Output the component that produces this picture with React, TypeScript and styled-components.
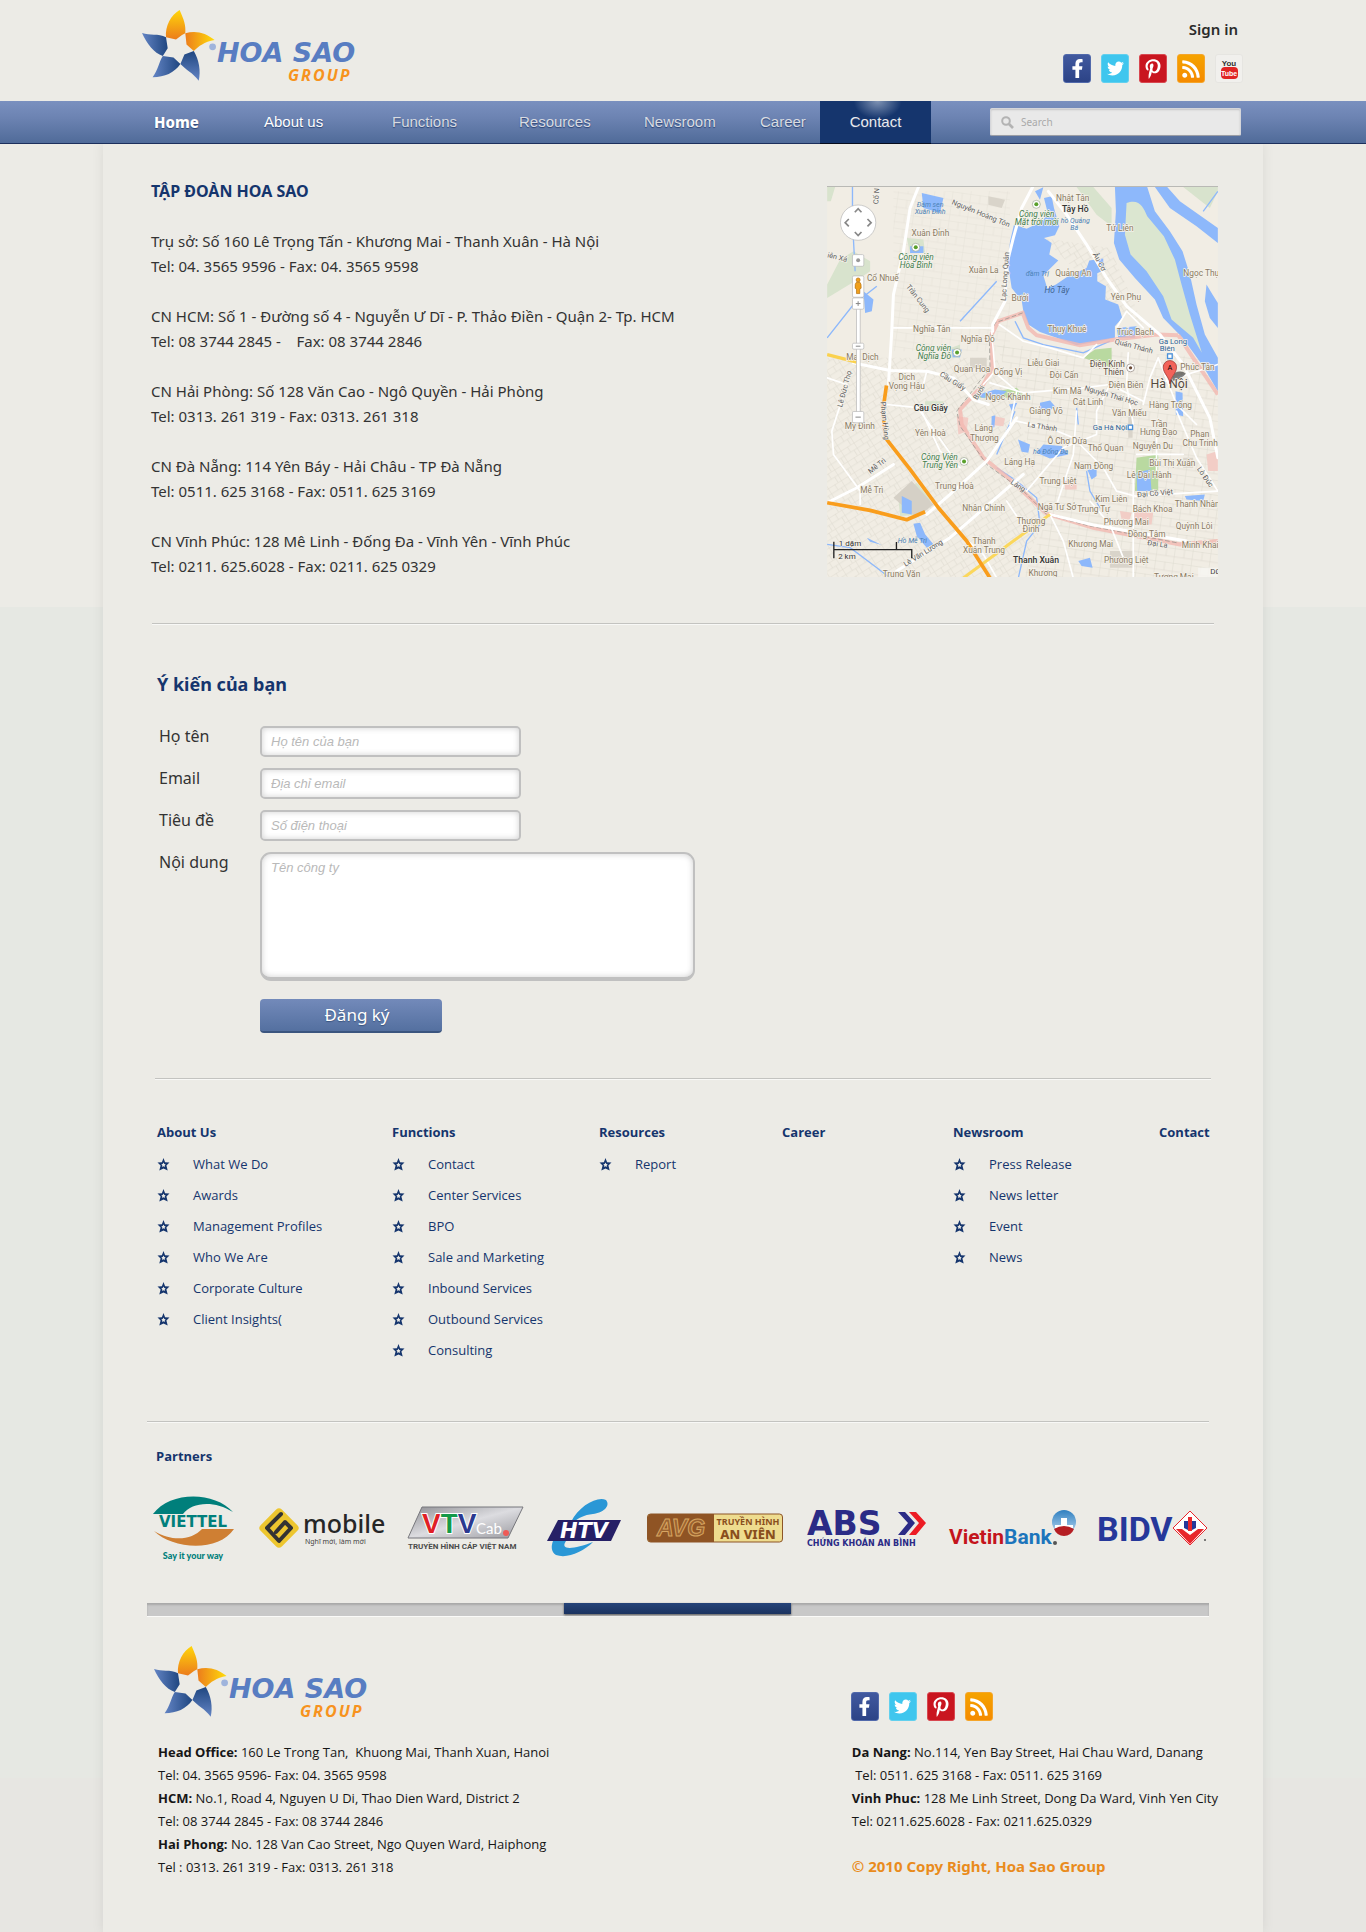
import React from "react";
import styled, { createGlobalStyle, css } from "styled-components";
import { FaFacebookF, FaTwitter, FaPinterestP, FaRss } from "react-icons/fa";

const sans = `"Noto Sans", "Open Sans", sans-serif`;
const small = `"Open Sans", "Noto Sans", sans-serif`;
const arial = `"Liberation Sans", Arial, sans-serif`;
const navy = "#15356d";

const GlobalStyle = createGlobalStyle`
  *, *::before, *::after { box-sizing: border-box; }
  body { margin: 0; background: #ecebe6; font-family: ${sans}; color: #333; }
  h1, h2, h3, p, ul { margin: 0; padding: 0; }
  ul { list-style: none; }
  a { color: inherit; text-decoration: none; }
  svg { display: block; }
`;

const Page = styled.div`
  min-height: 100vh;
  display: flex;
  flex-direction: column;
  background: linear-gradient(#ecebe6 0 607px, #e6e8e3 607px 1778px, #e7e6e2 1778px);
`;

/* ---------- header ---------- */

const Header = styled.header`
  width: 100%;
  max-width: 1160px;
  height: 101px;
  margin: 0 auto;
  padding: 10px 20px 0 39px;
  display: flex;
  justify-content: space-between;
`;

const Account = styled.div`
  display: flex;
  flex-direction: column;
  align-items: flex-end;
  gap: 14px;
  padding-top: 8px;
`;

const SignIn = styled.a`
  padding-right: 5px;
  font-size: 15px;
  line-height: 22px;
  font-weight: 600;
  color: #2b2b2b;
`;

const SocialRow = styled.div`
  display: flex;
  gap: 10px;
`;

const SocialLink = styled.a<{ $bg: string; $edge: string }>`
  width: 28px;
  height: 29px;
  display: flex;
  align-items: center;
  justify-content: center;
  border-radius: 3px;
  border: 1px solid ${(p) => p.$edge};
  background: ${(p) => p.$bg};
  color: #fff;
`;

/* ---------- navigation ---------- */

const NavBar = styled.nav`
  position: relative;
  border-bottom: 1px solid #1c2f5c;
  background: linear-gradient(#7a90bf, #6c83b2 40%, #506b99);
`;

const NavInner = styled.div`
  max-width: 1160px;
  height: 42px;
  margin: 0 auto;
  padding: 0 22px 0 51px;
  display: grid;
  grid-template-columns: 110fr 128fr 127fr 125fr 116fr 60fr 111fr 310fr;
  align-items: stretch;
`;

const NavLink = styled.a<{ $tone?: "bold" | "bright" | "active" }>`
  display: flex;
  align-items: center;
  font-family: ${arial};
  font-size: 15px;
  line-height: 20px;
  white-space: nowrap;
  color: #d9dce2;
  text-shadow: 0 1px 1px #2b4373;
  ${(p) =>
    p.$tone === "bold" &&
    css`
      font-family: ${sans};
      font-weight: 800;
      color: #fff;
    `}
  ${(p) => p.$tone === "bright" && "color: #fff;"}
  ${(p) =>
    p.$tone === "active" &&
    css`
      justify-content: center;
      margin-bottom: -1px;
      border-bottom: 1px solid #050b1c;
      color: #e8eaee;
      background: radial-gradient(ellipse 24px 18px at 52% 0, #7f93b4, #15356d 100%) #15356d;
    `}
`;

const Search = styled.form`
  align-self: center;
  justify-self: end;
  width: 81%;
  height: 28px;
  display: flex;
  align-items: center;
  gap: 7px;
  padding: 0 10px;
  border-radius: 2px;
  border: 1px solid #d5d6da;
  border-bottom-color: #9a9da5;
  background: #e9e9e9;
  box-shadow: inset 0 1px 2px #c4c4c6;
`;

const SearchInput = styled.input`
  flex: 1;
  min-width: 0;
  padding: 0;
  border: 0;
  outline: 0;
  background: none;
  font-family: ${sans};
  font-size: 10px;
  color: #666;
  &::placeholder { color: #a9a9a9; opacity: 1; }
`;

/* ---------- body panel ---------- */

const Panel = styled.div`
  flex: 1;
  width: 100%;
  max-width: 1160px;
  margin: 0 auto;
  background: #ecebe6;
  box-shadow: 0 0 12px rgba(0, 0, 0, 0.08);
`;

const Rule = styled.hr<{ $left: number; $right: number }>`
  height: 2px;
  margin: 0 ${(p) => p.$right}px 0 ${(p) => p.$left}px;
  border: 0;
  border-top: 1px solid #c3c3c0;
  border-bottom: 1px solid #f8f8f6;
`;

const ContactSection = styled.section`
  display: flex;
  justify-content: space-between;
  padding: 35px 45px 44px 48px;
`;

const Offices = styled.div`
  display: flex;
  flex-direction: column;
  gap: 25px;
  font-size: 15px;
  line-height: 25px;
`;

const CompanyName = styled.h1`
  font-size: 16px;
  line-height: 25px;
  font-weight: 700;
  color: ${navy};
`;

const OfficeText = styled.p`
  white-space: pre-wrap;
`;

const MapFrame = styled.div`
  width: 391px;
  height: 391px;
  margin-top: 7px;
  border-top: 1px solid #b9b9b5;
  overflow: hidden;
`;

const FeedbackSection = styled.section`
  padding: 45px 45px 45px 54px;
`;

const FeedbackTitle = styled.h2`
  margin-bottom: 28px;
  font-size: 18px;
  line-height: 28px;
  font-weight: 700;
  color: ${navy};
`;

const Form = styled.form`
  display: grid;
  grid-template-columns: 101px minmax(0, 435px);
  gap: 11px 0;
  align-items: start;
  padding-left: 2px;
`;

const Label = styled.label`
  font-size: 16px;
  line-height: 20px;
`;

const fieldText = css`
  font-family: ${arial};
  font-size: 13px;
  color: #555;
  outline: 0;
  &::placeholder { color: #b9b9b9; font-style: italic; opacity: 1; }
`;

const Field = styled.input`
  ${fieldText}
  width: 60%;
  height: 31px;
  padding: 0 9px;
  border: 2px solid #c0c0c0;
  border-radius: 5px;
  background: #fff;
  box-shadow: inset 0 0 6px #d0d0d0;
`;

const Message = styled.textarea`
  ${fieldText}
  display: block;
  width: 100%;
  height: 129px;
  padding: 5px 9px;
  line-height: 18px;
  resize: none;
  border: 2px solid #c0c0c0;
  border-bottom-width: 4px;
  border-radius: 11px;
  background: #fff;
  box-shadow: inset 0 0 6px #d0d0d0;
`;

const Submit = styled.button`
  grid-column: 2;
  width: 182px;
  height: 34px;
  margin-top: 7px;
  padding: 0 0 0 12px;
  border: 0;
  border-bottom: 2px solid #3b557f;
  border-radius: 4px;
  background: linear-gradient(#738aba, #5470a0);
  font-family: ${sans};
  font-size: 17px;
  line-height: 24px;
  color: #fff;
  text-shadow: 0 1px 1px #3b557f;
`;

/* ---------- site map ---------- */

const SiteMap = styled.section`
  display: grid;
  grid-template-columns: 235fr 207fr 183fr 171fr 206fr 55fr;
  padding: 42px 49px 55px 54px;
  color: ${navy};
  font-family: ${small};
  font-size: 13px;
`;

const SmallTitle = styled.h3`
  font-family: ${small};
  font-size: 13px;
  line-height: 20px;
  font-weight: 700;
  color: ${navy};
`;

const LinkList = styled.ul`
  margin-top: 7px;
`;

const LinkRow = styled.li`
  display: flex;
  align-items: center;
  gap: 23px;
  line-height: 31px;
`;

/* ---------- partners ---------- */

const Partners = styled.section`
  padding: 23px 54px 30px 44px;
`;

const PartnersTitle = styled(SmallTitle)`
  padding-left: 9px;
`;

const LogoRow = styled.div`
  display: flex;
  justify-content: space-between;
  align-items: center;
  margin: 30px 0 43px 5px;
  svg { overflow: visible; }
`;

const Track = styled.div`
  height: 13px;
  background: #c8c8c8;
  box-shadow: inset 0 2px 2px #a9a9a9, 0 1px 0 #fafaf8;
`;

const Thumb = styled.div`
  width: 21.3%;
  height: 11px;
  margin-left: 39.3%;
  background: linear-gradient(#264479, #1a325f);
  box-shadow: 0 1px 2px #555;
`;

/* ---------- footer ---------- */

const Footer = styled.footer`
  display: grid;
  grid-template-columns: 697fr 367fr;
  padding: 0 45px 48px 51px;
  color: #161616;
`;

const FooterHead = styled.div`
  height: 75px;
  display: flex;
  align-items: flex-start;
  margin-bottom: 20px;
`;

const FooterSocial = styled(FooterHead)`
  align-items: flex-end;
`;

const Address = styled.address<{ $indent?: boolean }>`
  padding-left: ${(p) => (p.$indent ? 4 : 1)}px;
  font-family: ${small};
  font-style: normal;
  font-size: 13px;
  line-height: 23px;
  white-space: pre;
`;

const Copyright = styled.p`
  margin: 22px 0 0 1px;
  font-size: 15px;
  line-height: 23px;
  font-weight: 700;
  color: #e98b1d;
`;

/* ---------- drawings ---------- */

function HoaSaoLogo({ id }: { id: string }) {
  const u = (n: string) => `url(#${id}-${n})`;
  return (
    <svg width="216" height="72" viewBox="0 0 216 72" overflow="visible" role="img" aria-label="Hoa Sao Group">
      <defs>
        <linearGradient id={`${id}-a`} x1="0" y1="0" x2="0" y2="1">
          <stop offset="0" stopColor="#ffd60a" />
          <stop offset="1" stopColor="#ec7c1c" />
        </linearGradient>
        <linearGradient id={`${id}-b`} x1="1" y1="0" x2="0" y2="0">
          <stop offset="0" stopColor="#ffdc0a" />
          <stop offset="1" stopColor="#ec7c1c" />
        </linearGradient>
        <linearGradient id={`${id}-c`} x1="0" y1="0" x2="1" y2="0">
          <stop offset="0" stopColor="#6384c4" />
          <stop offset="1" stopColor="#1f4680" />
        </linearGradient>
        <linearGradient id={`${id}-d`} x1="0" y1="1" x2="0" y2="0">
          <stop offset="0" stopColor="#6384c4" />
          <stop offset="1" stopColor="#1f4680" />
        </linearGradient>
      </defs>
      <path fill={u("a")} d="M37.6 0C42 10 44 15 43.3 23.3L40 25L34 29.5L24 27.3C23 16 29 5 37.6 0Z" />
      <path fill={u("b")} d="M43.3 23.3C54 20 64 23 72.6 30C62 32 57 36 51.8 41L44.5 34.5Z" />
      <path fill={u("d")} d="M51.8 41C57 50 59 61 56.7 70.7C51 63 44 60 38.4 54L42.4 44.5Z" />
      <path fill={u("c")} d="M38.4 54C32 63 23 67 10.6 67.3C16 60 17 52 20.8 46L31.5 47.5Z" />
      <path fill={u("c")} d="M0 23C8 26 16 23 24 27.3L25.7 38.3L20.8 46C12 43 5 34 0 23Z" />
      <circle cx="70.6" cy="36.8" r="3.4" fill="#9fb4dc" />
      <text x="75" y="52" fontFamily="DejaVu Sans" fontWeight="700" fontStyle="italic" fontSize="27" fill="#587dc2">HOA SAO</text>
      <text x="146" y="71" fontFamily="Noto Sans" fontWeight="700" fontStyle="italic" fontSize="16" letterSpacing="2" fill="#f7931e">GROUP</text>
    </svg>
  );
}

function YouTubeMark() {
  return (
    <svg width="26" height="27" viewBox="0 0 26 27" aria-hidden="true">
      <text x="13" y="11" textAnchor="middle" fontFamily="Liberation Sans" fontWeight="700" fontSize="8" fill="#333">You</text>
      <rect x="5" y="12" width="17" height="12" rx="4" fill="#e02424" />
      <text x="13" y="21" textAnchor="middle" fontFamily="Liberation Sans" fontWeight="700" fontSize="7" fill="#fff">Tube</text>
    </svg>
  );
}

function StarBullet() {
  return (
    <svg width="13" height="13" viewBox="0 0 12 13" aria-hidden="true">
      <path
        fillRule="evenodd"
        fill={navy}
        d="M6 0L7.6 4.2L12 4.6L8.9 7.6L10.2 12.6L6 10.4L1.8 12.6L3.1 7.6L0 4.6L4.4 4.2ZM6 4.6L5.2 6L3.9 6.3L4.8 7.4L4.7 9L6 8.3L7.3 9L7.2 7.4L8.1 6.3L6.8 6Z"
      />
    </svg>
  );
}

function Magnifier() {
  return (
    <svg width="13" height="13" viewBox="0 0 13 13" fill="none" stroke="#b3b3b3" aria-hidden="true">
      <circle cx="5" cy="5" r="3.8" strokeWidth="2" />
      <path d="M8 8L12 12" strokeWidth="2.6" />
    </svg>
  );
}

type Place = [number, number, string, number?];
const places: Place[] = [
  [788, 88, "Nhật Tân"], [930, 178, "Tứ Liên"], [361, 194, "Xuân Đỉnh"], [521, 304, "Xuân La"],
  [218, 329, "Cổ Nhuế"], [790, 313, "Quảng An"], [630, 389, "Bưởi"], [948, 386, "Yên Phụ"],
  [365, 481, "Nghĩa Tân"], [503, 511, "Nghĩa Đô"], [771, 481, "Thụy Khuê"], [976, 491, "Trúc Bạch"],
  [157, 567, "Mai Dịch"], [290, 626, "Dịch"], [290, 653, "Vọng Hậu"], [486, 602, "Quan Hoa"],
  [594, 612, "Cống Vị"], [700, 585, "Liễu Giai"], [762, 620, "Đội Cấn"], [948, 650, "Điện Biên"],
  [594, 687, "Ngọc Khánh"], [772, 668, "Kim Mã"], [834, 703, "Cát Linh"], [708, 728, "Giảng Võ"],
  [958, 735, "Văn Miếu"], [1082, 710, "Hàng Trống"], [1048, 767, "Trần"], [1046, 793, "Hưng Đạo"],
  [1170, 799, "Phan"], [1171, 825, "Chu Trinh"], [149, 775, "Mỹ Đình"], [361, 796, "Yên Hoà"],
  [521, 780, "Láng"], [523, 809, "Thượng"], [772, 819, "Ô Chợ Dừa"], [887, 841, "Thổ Quan"],
  [1029, 835, "Nguyễn Du"], [629, 882, "Láng Hạ"], [851, 893, "Nam Đồng"], [1087, 885, "Bùi Thị Xuân"],
  [1018, 920, "Lê Đại Hành"], [433, 954, "Trung Hoà"], [744, 939, "Trung Liệt"], [185, 965, "Mễ Trì"],
  [521, 1020, "Nhân Chính"], [741, 1018, "Ngã Tư Sở"], [851, 1024, "Trung Tự"], [904, 993, "Kim Liên"],
  [1028, 1024, "Bách Khoa"], [1162, 1009, "Thanh Nhàn"], [949, 1063, "Phương Mai"], [1153, 1074, "Quỳnh Lôi"],
  [663, 1060, "Thượng"], [663, 1083, "Đình"], [1010, 1097, "Đồng Tâm"], [842, 1128, "Khương Mai"],
  [522, 1119, "Thanh"], [522, 1145, "Xuân Trung"], [1171, 1132, "Minh Khai"], [949, 1176, "Phương Liệt"],
  [699, 1214, "Khương"], [274, 1219, "Trung Văn"], [1092, 1226, "Tương Mai"], [1180, 315, "Ngọc Thụy"],
  [1163, 595, "Phúc Tân"],
];
const streets: Place[] = [
  [510, 133, "Nguyễn Hoàng Tôn", 22], [592, 316, "Lạc Long Quân", -86], [862, 275, "Âu Cơ", 62],
  [318, 386, "Trần Cung", 52], [424, 636, "Cầu Giấy", 32], [513, 668, "Bưởi", -58],
  [970, 532, "Quán Thánh", 15], [902, 680, "Nguyễn Thái Học", 16], [696, 774, "La Thành", 9],
  [110, 655, "Lê Đức Thọ", -75], [217, 750, "Phạm Hùng", 84], [205, 890, "Mễ Trì", -38],
  [620, 950, "Láng", 33], [1036, 974, "Đại Cồ Việt", -5], [1180, 922, "Lò Đúc", 55],
  [1042, 1126, "Đại La", 8], [343, 1152, "Lê Văn Lương", -32], [206, 75, "Cổ N", -86], [80, 265, "iên Xá", 14],
];
const parks: Place[] = [
  [680, 136, "Công viên"], [680, 160, "Mặt trời mới"], [318, 265, "Công viên"], [318, 290, "Hòa Bình"],
  [370, 539, "Công viên"], [373, 564, "Nghĩa Đô"], [388, 867, "Công Viên"], [390, 891, "Trung Yên"],
];
const waters: Place[] = [
  [360, 107, "Đầm sen"], [360, 128, "Xuân Đỉnh"], [796, 155, "hồ Quảng"], [793, 175, "Bá"],
  [682, 315, "đầm Trị"], [722, 849, "hồ Đống Đa"], [307, 1116, "Hồ Mễ Trì"],
];

function HanoiMap() {
  const dots: [number, number][] = [[679, 99], [317, 228], [441, 544], [462, 871]];
  return (
    <svg width="391" height="391" viewBox="51 47 1173 1174" fontFamily="Roboto" role="img" aria-label="Hà Nội">
      <defs>
        <pattern id="blocks" width="46" height="38" patternUnits="userSpaceOnUse" patternTransform="rotate(-32)">
          <path d="M0 1H46M1 0V38M24 0V20M0 20H46M36 20V38" stroke="#ddd8cd" strokeWidth="1.6" fill="none" />
        </pattern>
        <pattern id="blocks2" width="54" height="44" patternUnits="userSpaceOnUse" patternTransform="rotate(8)">
          <path d="M0 1H54M1 0V44M30 0V26M0 26H54" stroke="#dcd7cd" strokeWidth="1.6" fill="none" />
        </pattern>
      </defs>
      <rect x="51" y="47" width="1173" height="1174" fill="#f1ede4" />
      <path d="M51 560H560L720 1020L620 1221H51Z" fill="url(#blocks)" />
      <path d="M560 520L1224 560V1221H640L720 1020Z" fill="url(#blocks2)" />
      <path d="M250 60H600V540H250Z" fill="url(#blocks2)" opacity=".6" />
      <path d="M700 200L900 230L1000 460L900 400Z" fill="url(#blocks)" />

      <g fill="#d8e3cd">
        <path d="M51 47H75L62 90H51ZM90 265L130 240L180 270V300L150 320L51 380V340Z" />
        <path d="M800 47H850L905 110V165L860 130ZM1120 47H1224V60L1200 110Z" />
        <path d="M290 200L340 205L345 245L300 245ZM410 535L450 520V560H415Z" />
        <path d="M855 535L905 530V590L820 560ZM980 860L1045 850V960H975ZM500 670L620 650L650 680H510Z" fill="#b9d9a0" />
        <path d="M265 985L320 935L360 985L330 1030L270 1035ZM345 690L400 690V720H345Z" />
      </g>
      <path d="M250 980L305 930L370 1000L320 1040Z" fill="#d5d0c6" />
      <g fill="#f2cdc6">
        <path d="M440 735L475 740L470 780L445 790ZM555 735L585 742L580 765L552 762ZM975 1020L1030 1025L1025 1060H970ZM765 930H800V955H765Z" />
        <path d="M1190 850L1224 840V900H1195ZM930 1020L965 1025L960 1045H935Z" />
      </g>
      <g fill="#d9d4ca">
        <path d="M535 75L585 85L575 110L535 100ZM955 720H968V800H955ZM480 560H530V590H480ZM1120 860H1150V890H1120ZM900 1140H970V1190H900Z" />
      </g>

      <g fill="#8db8fb">
        <path d="M612 160L650 172L700 148L712 120L702 80L725 75L732 110L748 165L735 192L702 200L725 215L718 250L745 268L700 312L712 352L738 340L770 318L830 290L838 268L880 262L880 298L862 306L862 330L888 345L886 385L925 400L937 440L915 465L915 500L860 512L800 522L740 500L690 482L655 460L640 420L635 388L605 350L594 280L600 210Z" />
        <path d="M915 47H1012L1035 120L1080 180L1118 240L1140 310L1160 400L1185 490L1224 560V660L1180 585L1118 500L1060 440L1035 385L975 320L928 265L912 215L918 120Z" />
        <path d="M1035 47H1072L1110 90L1224 170V215L1160 165L1080 110Z" />
        <path d="M1190 340L1208 370L1224 395V470L1200 440L1185 390Z" />
        <path d="M335 65L400 80L390 125L340 110ZM160 360L190 385L185 420L165 425ZM300 225H340V245H300ZM425 535H455L450 558H428Z" />
        <path d="M690 695L720 688L735 705L715 722L690 715ZM597 700L622 695L608 725ZM505 670L555 655L590 660L570 680H515Z" />
        <path d="M624 805L660 820L655 845L635 842ZM700 820L755 825L775 850L720 862L680 845ZM832 895L860 893V915L845 925ZM980 905L1020 895L1025 960H982Z" />
        <path d="M1097 660L1118 665L1120 735L1098 730ZM275 975L305 990V1030L275 1025ZM310 1058L330 1055L345 1090L370 1120L350 1130L320 1095ZM170 1100L215 1122L180 1112Z" />
        <path d="M675 60L700 48L690 85ZM545 735L556 732L553 768L544 770ZM805 1170L840 1160L848 1190L815 1185ZM1125 975L1185 970L1180 990L1130 985ZM920 470L980 465L975 500L925 500Z" />
      </g>
      <path d="M950 95C990 82 1000 108 1012 135L1062 195L1095 265L1115 340L1140 430L1176 545L1150 500L1085 445L1060 375L1010 300L962 250L945 190Z" fill="#dbe6d0" />
      <g fill="none" stroke="#8db8fb" strokeWidth="4">
        <path d="M127 47V150L135 300M200 345L130 400L51 500M450 450L560 330M1224 60L1180 120" />
        <path d="M615 450L640 500L700 520L820 545L900 510M560 890L620 930L680 980L690 1060L650 1110L625 1221M830 900L840 960L870 1010" />
        <path d="M51 1120L120 1130L200 1190L240 1221M800 710L805 760M615 720L560 850" />
      </g>

      <path d="M1105 492L1040 490L915 505L810 522L680 492L655 470L638 425L565 450L545 490L547 590L520 640L450 715L455 760L520 860L600 925L710 1028L850 1070L1110 1120L1224 1110M1105 492L1150 560L1224 670" fill="none" stroke="#f2b8b0" strokeWidth="12" opacity=".8" />
      <path d="M638 425L555 455L538 500L540 590L440 720L450 765L530 880L640 960L710 1030L840 1065L1100 1115" fill="none" stroke="#8c8c86" strokeWidth="2" strokeDasharray="14 7" />

      <g fill="none" stroke="#fff" strokeLinejoin="round" strokeLinecap="round">
        <g strokeWidth="9">
          <path d="M325 47L300 110L280 240L250 370L245 480L235 640" />
          <path d="M668 47L635 110L610 200L590 280L585 390L548 460V480" />
          <path d="M715 60L770 130L830 220L890 320L950 405L1050 490L1120 580L1140 620L1200 740L1224 860" />
          <path d="M130 575L240 598L350 600L430 620L490 685L535 700M720 1030L850 1062L1130 1110" />
          <path d="M350 1030L420 970L530 870L620 740" />
          <path d="M51 995L140 950L250 880M260 1200L420 1100L640 910" />
        </g>
        <g strokeWidth="5">
          <path d="M250 470H548M568 460L640 510L720 530L820 560L860 520M545 480L555 600L520 640M350 600L335 660" />
          <path d="M540 635L640 665L820 650L900 640L1000 690M620 750L730 775L790 800L880 890L920 960L975 975L1224 960" />
          <path d="M970 900V1221M955 545L950 640L970 760M900 640L860 720L860 790L760 830L700 900L650 960" />
          <path d="M230 700L330 710L390 840L450 890M51 620L110 640L65 780L70 850L150 960V1000M330 720L430 860" />
          <path d="M550 600L620 660L600 760M800 720L790 850L740 1000M1045 560L1020 620L1000 700M1045 560L1100 700L1160 760" />
          <path d="M1040 800V900M980 850H1120M1100 720L1160 860L1224 960M840 990L900 1060L940 1160M1224 580L1100 620L1040 640" />
          <path d="M440 1080L520 1150L560 1221M590 990L650 1080M720 1030L760 1110L790 1221M920 470L950 420L1000 470" />
        </g>
      </g>

      <g fill="none" strokeLinejoin="round">
        <path d="M51 550L140 573" stroke="#fad14e" strokeWidth="10" />
        <path d="M720 1030L610 1110L460 1221" stroke="#fbd75c" strokeWidth="9" />
        <path d="M229 643L218 720L226 800L300 895L385 1010L470 1110L540 1221" stroke="#f99d1c" strokeWidth="11" />
        <path d="M51 995L180 1018L290 1046L345 1022" stroke="#f99d1c" strokeWidth="11" />
      </g>

      <g textAnchor="middle" fontSize="26" stroke="#f6f3ec" strokeWidth="4" paintOrder="stroke">
        <g fill="#8a7a62" fontSize="25">
          {places.map(([x, y, t]) => <text key={t + y} x={x} y={y}>{t}</text>)}
        </g>
        <g fill="#5d5d5d" fontSize="22">
          {streets.map(([x, y, t, r]) => <text key={t + y} transform={`rotate(${r} ${x} ${y})`} x={x} y={y}>{t}</text>)}
        </g>
        <g fill="#3f7d4c" fontStyle="italic" fontSize="25">
          {parks.map(([x, y, t]) => <text key={t + y} x={x} y={y}>{t}</text>)}
        </g>
        <g fill="#4b82b5" fontStyle="italic" fontSize="21" stroke="none">
          {waters.map(([x, y, t]) => <text key={t + y} x={x} y={y}>{t}</text>)}
          <text x="741" y="364" fontSize="25" fill="#41648f">Hồ Tây</text>
        </g>
        <g fill="#2c6296" fontSize="23">
          <text x="1089" y="517">Ga Long</text>
          <text x="1072" y="540">Biên</text>
          <text x="900" y="777">Ga Hà Nội</text>
        </g>
        <g fill="#5c4f44" fontSize="25">
          <text x="892" y="586">Điện Kính</text>
          <text x="911" y="611">Thiên</text>
        </g>
        <g fill="#333" fontSize="26" fontWeight="500">
          <text x="796" y="122">Tây Hồ</text>
          <text x="362" y="721">Cầu Giấy</text>
          <text x="678" y="1175">Thanh Xuân</text>
        </g>
      </g>

      {dots.map(([x, y]) => (
        <g key={x}>
          <circle cx={x} cy={y} r="12" fill="#fff" stroke="#9aa590" strokeWidth="2" />
          <circle cx={x} cy={y} r="6" fill="#5aa02c" />
        </g>
      ))}
      <circle cx="962" cy="590" r="12" fill="#fff" stroke="#8b8178" strokeWidth="2" />
      <circle cx="962" cy="590" r="5" fill="#6b4a36" />
      <g fill="#fff" stroke="#4a90d9" strokeWidth="4">
        <rect x="1073" y="548" width="14" height="14" />
        <rect x="955" y="762" width="13" height="13" />
      </g>

      <path d="M1080 632L1095 605Q1115 595 1128 608Q1115 625 1080 632Z" fill="#000" opacity=".5" />
      <text x="1078" y="652" textAnchor="middle" fontSize="37" fill="#54493d" stroke="#f6f3ec" strokeWidth="4" paintOrder="stroke">Hà Nội</text>
      <path d="M1080 638C1078 615 1060 608 1060 588A20 20 0 0 1 1100 588C1100 608 1082 615 1080 638Z" fill="#f2635a" stroke="#8f2a24" strokeWidth="2" />
      <text x="1080" y="597" textAnchor="middle" fontSize="22" fill="#000">A</text>

      <g stroke="#b5b5b5" strokeWidth="2">
        <circle cx="144" cy="154" r="53" fill="#fff" />
        <rect x="139" y="400" width="11" height="330" fill="#fff" />
        <rect x="127" y="250" width="34" height="35" rx="4" fill="#fff" />
        <rect x="127" y="314" width="34" height="64" rx="4" fill="#fff" />
        <rect x="127" y="380" width="34" height="34" rx="4" fill="#fff" />
        <rect x="127" y="721" width="34" height="34" rx="4" fill="#fff" />
        <rect x="127" y="516" width="34" height="18" rx="4" fill="#fff" />
      </g>
      <g fill="none" stroke="#888" strokeWidth="5">
        <path d="M134 123L144 112L154 123M134 182L144 193L154 182M116 143L105 154L116 165M172 143L183 154L172 165" />
        <path d="M137 397H151M144 390V404M136 738H152M137 525H151" strokeWidth="3" />
      </g>
      <circle cx="144" cy="267" r="6" fill="#999" />
      <path d="M139 333H149Q154 336 153 351L149 353V367H139V353L135 351Q134 336 139 333Z" fill="#f0a01c" stroke="#b46c0a" strokeWidth="2" />
      <circle cx="144" cy="326" r="6" fill="#f0a01c" stroke="#b46c0a" strokeWidth="2" />

      <path d="M71 1112V1162M71 1136H305V1162M259 1113V1136" fill="none" stroke="#222" strokeWidth="4" />
      <g fill="#333" fontSize="24" stroke="#f6f3ec" strokeWidth="3" paintOrder="stroke">
        <text x="86" y="1125">1 dặm</text>
        <text x="84" y="1164">2 km</text>
      </g>
      <rect x="1165" y="1190" width="59" height="31" fill="#f7f6f3" opacity=".8" />
      <text x="1201" y="1210" fontSize="24" fill="#444">Dữ</text>
    </svg>
  );
}

const Viettel = () => (
  <svg width="84" height="64" viewBox="0 0 84 64" role="img" aria-label="Viettel">
    <path fill="#007f7b" d="M1 18C18 -5 62 -5 81 16C62 4 40 6 31 18Z" />
    <path fill="#cf7f33" d="M2 35C20 46 40 44 50 33H82C66 57 20 53 2 35Z" />
    <text x="41" y="31" textAnchor="middle" fontFamily="DejaVu Sans" fontWeight="700" fontSize="15" fill="#007f7b">VIETTEL</text>
    <text x="41" y="63" textAnchor="middle" fontFamily="Lato" fontWeight="900" fontSize="9" fill="#007f7b">Say it your way</text>
  </svg>
);

const Gmobile = () => (
  <svg width="127" height="44" viewBox="0 0 127 44" role="img" aria-label="Gmobile">
    <rect x="6" y="7" width="30" height="30" rx="4" transform="rotate(45 21 22)" fill="#edc62f" />
    <path d="M23 8L9 22L21 35L33 22L27 16L18 26" fill="none" stroke="#333" strokeWidth="4" strokeLinejoin="round" strokeLinecap="round" />
    <text x="45" y="27" fontFamily="Noto Sans" fontWeight="500" fontSize="25" fill="#262626">mobile</text>
    <text x="47" y="38" fontFamily="Noto Sans" fontSize="7" fill="#444">Nghĩ mới, làm mới</text>
  </svg>
);

const VtvCab = () => (
  <svg width="118" height="44" viewBox="0 0 118 44" role="img" aria-label="VTVCab">
    <defs>
      <linearGradient id="steel" x1="0" y1="0" x2="1" y2="1">
        <stop offset="0" stopColor="#8f8f94" />
        <stop offset=".5" stopColor="#dcdce0" />
        <stop offset="1" stopColor="#98989e" />
      </linearGradient>
    </defs>
    <path d="M15 1H116L101 32H1Z" fill="url(#steel)" stroke="#77777c" />
    <text x="15" y="27" strokeWidth="2" stroke="#fff" paintOrder="stroke" fontFamily="Liberation Sans" fontWeight="700" fontSize="28">
      <tspan fill="#e01f26">V</tspan><tspan fill="#149a48">T</tspan><tspan fill="#2b3990">V</tspan>
    </text>
    <text x="69" y="28" fontFamily="Lato" fontSize="15" fill="#fff">Cab</text>
    <circle cx="99" cy="27" r="3" fill="#ef5a55" />
    <text x="1" y="43" fontFamily="Roboto" fontWeight="700" fontSize="8" fill="#4b4b4b">TRUYỀN HÌNH CÁP VIỆT NAM</text>
  </svg>
);

const Htv = () => (
  <svg width="79" height="60" viewBox="0 0 79 60" role="img" aria-label="HTV">
    <path d="M24 24C32 8 50 -2 59 2C64 8 56 15 46 16C37 17 31 20 27 24Z" fill="#2a97d6" />
    <path d="M6 43H19C12 53 28 51 46 44C36 54 20 61 9 57C4 54 4 48 6 43Z" fill="#2a97d6" />
    <path d="M11 22H74L64 43H0Z" fill="#262066" />
    <text x="37" y="40" textAnchor="middle" fontFamily="DejaVu Sans" fontWeight="700" fontStyle="italic" fontSize="21" fill="#fff">HTV</text>
  </svg>
);

const AnVien = () => (
  <svg width="138" height="30" viewBox="0 0 138 30" role="img" aria-label="AVG An Viên">
    <rect x=".5" y="1" width="135" height="28" rx="3" fill="#eedc8f" stroke="#8d5527" />
    <path d="M4 1H67V29H4Q1 29 1 26V4Q1 1 4 1Z" fill="#8f5424" />
    <text x="34" y="23" textAnchor="middle" fontFamily="Liberation Sans" fontWeight="700" fontStyle="italic" fontSize="23" fill="#9a6230" stroke="#d7a561" strokeWidth="1">AVG</text>
    <text x="101" y="12" textAnchor="middle" fontFamily="Noto Sans" fontWeight="700" fontSize="9" fill="#8a4f1d">TRUYỀN HÌNH</text>
    <text x="101" y="26" textAnchor="middle" fontFamily="Noto Sans" fontWeight="800" fontSize="13" fill="#8a4f1d">AN VIÊN</text>
  </svg>
);

const Abs = () => (
  <svg width="120" height="36" viewBox="0 0 120 36" role="img" aria-label="ABS">
    <text x="0" y="25" fontFamily="DejaVu Sans" fontWeight="700" fontSize="33" fill="#2b2b86">ABS</text>
    <path d="M91 2H98L108 13L98 25H91L101 13Z" fill="#2b2b86" />
    <path d="M102 2H109L119 13L109 25H102L112 13Z" fill="#ed1c24" />
    <text x="0" y="36" fontFamily="DejaVu Sans" fontWeight="700" fontSize="8" fill="#2b2b86">CHỨNG KHOÁN AN BÌNH</text>
  </svg>
);

const VietinBank = () => (
  <svg width="127" height="46" viewBox="0 0 127 46" role="img" aria-label="VietinBank">
    <defs>
      <linearGradient id="globe" x1="0" y1="0" x2="0" y2="1">
        <stop offset="0" stopColor="#2f7fc0" />
        <stop offset="1" stopColor="#b9d8f0" />
      </linearGradient>
    </defs>
    <text x="0" y="39" fontFamily="Roboto" fontWeight="700" fontSize="21" fill="#c4151c">
      Vietin<tspan fill="#1c75bc">Bank</tspan>
    </text>
    <circle cx="106" cy="38" r="2" fill="#555" />
    <circle cx="115" cy="17" r="12" fill="url(#globe)" />
    <path d="M112 13H118V20H124V23H106V20H112Z" fill="#fff" />
    <path d="M105 24Q115 18 125 24Q122 31 115 31T105 24Z" fill="#b51e23" />
  </svg>
);

const Bidv = () => (
  <svg width="111" height="40" viewBox="0 0 111 40" role="img" aria-label="BIDV">
    <text x="-1" y="33" fontFamily="Roboto" fontWeight="700" fontSize="34" fill="#26389a">BIDV</text>
    <path d="M92 3L109 20L92 37L75 20Z" fill="#fff" stroke="#e8262b" />
    <path d="M86 13H98V20L92 23L86 20Z" fill="#26389a" />
    <path d="M78 21H84L92 27L100 21H106L92 36Z" fill="#e8262b" />
    <path d="M90 9H94V23H90Z" fill="#e8262b" />
    <circle cx="107" cy="32" r="1" fill="#555" />
  </svg>
);

/* ---------- content ---------- */

const offices = [
  ["Trụ sở: Số 160 Lê Trọng Tấn - Khương Mai - Thanh Xuân - Hà Nội", "Tel: 04. 3565 9596 - Fax: 04. 3565 9598"],
  ["CN HCM: Số 1 - Đường số 4 - Nguyễn Ư Dĩ - P. Thảo Điền - Quận 2- Tp. HCM", "Tel: 08 3744 2845 -    Fax: 08 3744 2846"],
  ["CN Hải Phòng: Số 128 Văn Cao - Ngô Quyền - Hải Phòng", "Tel: 0313. 261 319 - Fax: 0313. 261 318"],
  ["CN Đà Nẵng: 114 Yên Báy - Hải Châu - TP Đà Nẵng", "Tel: 0511. 625 3168 - Fax: 0511. 625 3169"],
  ["CN Vĩnh Phúc: 128 Mê Linh - Đống Đa - Vĩnh Yên - Vĩnh Phúc", "Tel: 0211. 625.6028 - Fax: 0211. 625 0329"],
];

const siteMap: { title: string; links: string[] }[] = [
  { title: "About Us", links: ["What We Do", "Awards", "Management Profiles", "Who We Are", "Corporate Culture", "Client Insights("] },
  { title: "Functions", links: ["Contact", "Center Services", "BPO", "Sale and Marketing", "Inbound Services", "Outbound Services", "Consulting"] },
  { title: "Resources", links: ["Report"] },
  { title: "Career", links: [] },
  { title: "Newsroom", links: ["Press Release", "News letter", "Event", "News"] },
  { title: "Contact", links: [] },
];

function Social({ youtube = false }: { youtube?: boolean }) {
  return (
    <SocialRow>
      <SocialLink href="#" aria-label="Facebook" $bg="linear-gradient(#41599f, #2c4386)" $edge="#5169ab"><FaFacebookF size={19} /></SocialLink>
      <SocialLink href="#" aria-label="Twitter" $bg="#3fc6ee" $edge="#62d0ee"><FaTwitter size={17} /></SocialLink>
      <SocialLink href="#" aria-label="Pinterest" $bg="#c9151f" $edge="#d84850"><FaPinterestP size={20} /></SocialLink>
      <SocialLink href="#" aria-label="RSS" $bg="linear-gradient(#f5a300, #f58a00)" $edge="#f5a52a"><FaRss size={20} /></SocialLink>
      {youtube && <SocialLink href="#" aria-label="YouTube" $bg="#f1f0ed" $edge="#e6e5e1"><YouTubeMark /></SocialLink>}
    </SocialRow>
  );
}

export default function App() {
  return (
    <Page>
      <GlobalStyle />
      <Header>
        <a href="#"><HoaSaoLogo id="top" /></a>
        <Account>
          <SignIn href="#">Sign in</SignIn>
          <Social youtube />
        </Account>
      </Header>
      <NavBar>
        <NavInner>
          <NavLink href="#" $tone="bold">Home</NavLink>
          <NavLink href="#" $tone="bright">About us</NavLink>
          <NavLink href="#">Functions</NavLink>
          <NavLink href="#">Resources</NavLink>
          <NavLink href="#">Newsroom</NavLink>
          <NavLink href="#">Career</NavLink>
          <NavLink href="#" $tone="active">Contact</NavLink>
          <Search role="search">
            <Magnifier />
            <SearchInput type="search" aria-label="Search" placeholder="Search" />
          </Search>
        </NavInner>
      </NavBar>
      <Panel>
        <main>
          <ContactSection>
            <Offices>
              <CompanyName>TẬP ĐOÀN HOA SAO</CompanyName>
              {offices.map((lines) => (
                <OfficeText key={lines[0]}>{lines.join("\n")}</OfficeText>
              ))}
            </Offices>
            <MapFrame><HanoiMap /></MapFrame>
          </ContactSection>
          <Rule $left={49} $right={49} />
          <FeedbackSection>
            <FeedbackTitle>Ý kiến của bạn</FeedbackTitle>
            <Form>
              <Label htmlFor="name">Họ tên</Label>
              <Field id="name" placeholder="Họ tên của bạn" />
              <Label htmlFor="email">Email</Label>
              <Field id="email" type="email" placeholder="Địa chỉ email" />
              <Label htmlFor="subject">Tiêu đề</Label>
              <Field id="subject" placeholder="Số điện thoại" />
              <Label htmlFor="message">Nội dung</Label>
              <Message id="message" placeholder="Tên công ty" />
              <Submit type="button">Đăng ký</Submit>
            </Form>
          </FeedbackSection>
          <Rule $left={52} $right={52} />
          <SiteMap>
            {siteMap.map((col) => (
              <div key={col.title}>
                <SmallTitle>{col.title}</SmallTitle>
                <LinkList>
                  {col.links.map((l) => (
                    <LinkRow key={l}><StarBullet /><a href="#">{l}</a></LinkRow>
                  ))}
                </LinkList>
              </div>
            ))}
          </SiteMap>
          <Rule $left={44} $right={54} />
          <Partners>
            <PartnersTitle>Partners</PartnersTitle>
            <LogoRow>
              <Viettel /><Gmobile /><VtvCab /><Htv /><AnVien /><Abs /><VietinBank /><Bidv />
            </LogoRow>
            <Track><Thumb /></Track>
          </Partners>
        </main>
        <Footer>
          <div>
            <FooterHead><HoaSaoLogo id="foot" /></FooterHead>
            <Address $indent>
              <b>Head Office:</b> 160 Le Trong Tan,  Khuong Mai, Thanh Xuan, Hanoi{"\n"}
              Tel: 04. 3565 9596- Fax: 04. 3565 9598{"\n"}
              <b>HCM:</b> No.1, Road 4, Nguyen U Di, Thao Dien Ward, District 2{"\n"}
              Tel: 08 3744 2845 - Fax: 08 3744 2846{"\n"}
              <b>Hai Phong:</b> No. 128 Van Cao Street, Ngo Quyen Ward, Haiphong{"\n"}
              Tel : 0313. 261 319 - Fax: 0313. 261 318
            </Address>
          </div>
          <div>
            <FooterSocial><Social /></FooterSocial>
            <Address>
              <b>Da Nang:</b> No.114, Yen Bay Street, Hai Chau Ward, Danang{"\n"}
              {" "}Tel: 0511. 625 3168 - Fax: 0511. 625 3169{"\n"}
              <b>Vinh Phuc:</b> 128 Me Linh Street, Dong Da Ward, Vinh Yen City{"\n"}
              Tel: 0211.625.6028 - Fax: 0211.625.0329
            </Address>
            <Copyright>© 2010 Copy Right, Hoa Sao Group</Copyright>
          </div>
        </Footer>
      </Panel>
    </Page>
  );
}
